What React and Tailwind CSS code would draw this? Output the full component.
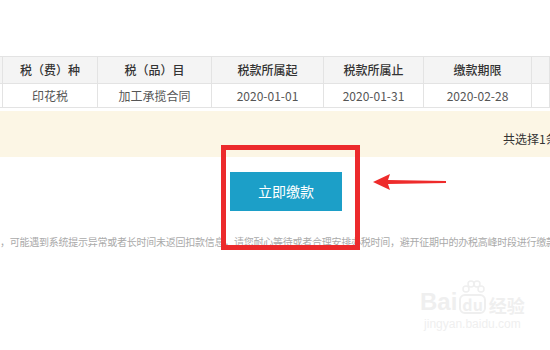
export default function App() {
  const cols = [
    { label: "", value: "" },
    { label: "税（费）种", value: "印花税" },
    { label: "税（品）目", value: "加工承揽合同" },
    { label: "税款所属起", value: "2020-01-01" },
    { label: "税款所属止", value: "2020-01-31" },
    { label: "缴款期限", value: "2020-02-28" },
    { label: "", value: "" },
  ];

  return (
    <div
      className="relative w-[550px] h-[350px] overflow-hidden bg-white"
      style={{ fontFamily: '"Noto Sans CJK SC", "Noto Sans", sans-serif' }}
    >
      <div className="pt-[56px]">
        {/* table */}
        <div className="grid grid-cols-[3px_95px_114px_112px_100px_108px_1fr] border-t border-[#e3e3e3] text-[12px]">
          {cols.map((c, i) => (
            <div
              key={"h" + i}
              className="h-[27px] flex items-center justify-center bg-[#f4f4f4] border-b border-r border-[#e3e3e3] text-[#333] font-medium"
            >
              {c.label}
            </div>
          ))}
          {cols.map((c, i) => (
            <div
              key={"r" + i}
              className="h-[24px] flex items-center justify-center bg-white border-b border-r border-[#e3e3e3] text-[#555]"
            >
              {c.value}
            </div>
          ))}
        </div>

        {/* selection bar */}
        <div className="mt-[3px] h-[46px] bg-[#fcf6e5] flex items-center pl-[503px] pt-[9px] whitespace-nowrap overflow-hidden text-[12px] text-[#333]">
          共选择1条
        </div>

        {/* pay button */}
        <button className="mt-[15px] ml-[230px] w-[112px] h-[39px] bg-[#1c9fc8] text-white text-[14px] flex items-center justify-center">
          立即缴款
        </button>

        {/* hint text */}
        <p className="mt-[25px] whitespace-nowrap text-[10px] leading-[12px] tracking-[-0.25px] text-[#aaa]">
          ，可能遇到系统提示异常或者长时间未返回扣款信息，请您耐心等待或者合理安排办税时间，避开征期中的办税高峰时段进行缴款
        </p>
      </div>

      {/* red highlight box */}
      <div className="absolute left-[221px] top-[145px] w-[139px] h-[105px] border-[5px] border-[#ec2a2c]" />

      {/* red arrow */}
      <svg className="absolute left-[370px] top-[172px]" width="80" height="20" viewBox="0 0 80 20">
        <polygon points="3,10 20,2 18,8 76,9 76,11 18,12 20,18" fill="#ee2b2b" />
      </svg>

      {/* watermark */}
      <div className="absolute left-[420px] top-[290px] flex flex-col items-center text-[#efefef] select-none">
        <div className="flex items-end">
          <span className="text-[24px] font-bold leading-none" style={{ fontFamily: '"Liberation Sans", sans-serif' }}>
            Bai
          </span>
          <span className="relative ml-[2px] text-[16px] font-bold leading-none border-2 border-[#efefef] rounded-[6px] px-[1px]">
            du
            <svg className="absolute -top-[16px] left-0" width="24" height="16" viewBox="0 0 24 16">
              <circle cx="5" cy="9" r="3" fill="none" stroke="#efefef" strokeWidth="1.5" />
              <circle cx="10" cy="4" r="3" fill="none" stroke="#efefef" strokeWidth="1.5" />
              <circle cx="16" cy="4" r="3" fill="none" stroke="#efefef" strokeWidth="1.5" />
              <circle cx="20" cy="9" r="3" fill="none" stroke="#efefef" strokeWidth="1.5" />
            </svg>
          </span>
          <span className="ml-[3px] text-[18px] font-bold leading-none">经验</span>
        </div>
        <span className="mt-[4px] text-[12px] leading-none" style={{ fontFamily: '"Liberation Sans", sans-serif' }}>
          jingyan.baidu.com
        </span>
      </div>
    </div>
  );
}
